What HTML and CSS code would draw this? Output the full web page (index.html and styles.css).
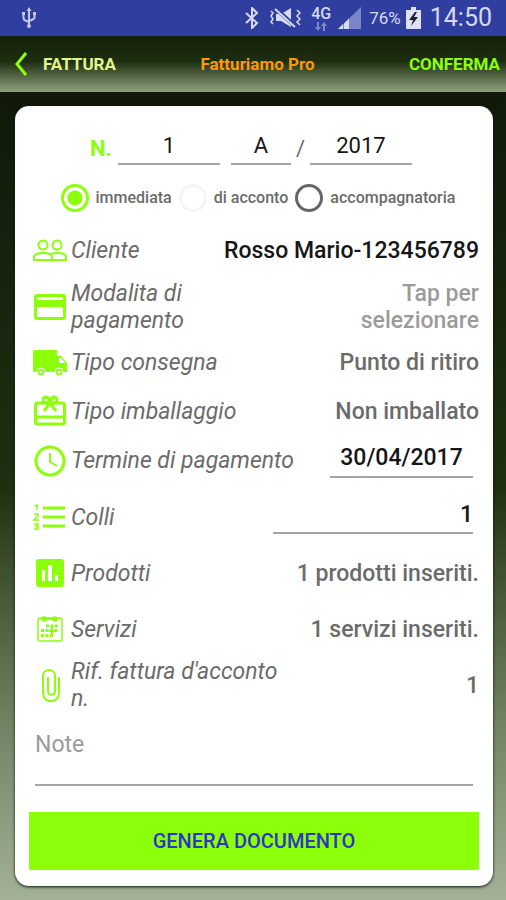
FILE: index.html
```html
<!DOCTYPE html>
<html lang="it">
<head>
  <meta charset="UTF-8" />
  <meta name="viewport" content="width=device-width, initial-scale=1.0">
  <title>Fatturiamo Pro - Fattura</title>
  <link rel="stylesheet" href="styles.css">
</head>
<body>
  <div class="statusbar">
    <svg class="usb" width="16" height="22" viewBox="0 0 16 22" fill="none" stroke="#c3c9ec" stroke-width="2">
      <path d="M8 3v15M2.500 7v4q0 2 2 2.500l3.500 1.500M13.500 7v3q0 2-2 2.500L8 14"/>
      <path d="M8 0l2.500 4h-5zM1 5h3v3H1zM12 5h3v3h-3z" fill="#c3c9ec" stroke="none"/>
      <circle cx="8" cy="19" r="2" fill="#c3c9ec" stroke="none"/>
    </svg>
    <div class="status-icons">
      <svg width="16" height="22" viewBox="0 0 16 22" fill="none" stroke="#d5d9f2" stroke-width="2">
        <path d="M2 6l11 10-5 5V1l5 5L2 16"/>
      </svg>
      <svg class="mute" width="33" height="22" viewBox="0 0 33 22" fill="none" stroke="#d5d9f2" stroke-width="2">
        <path d="M7 7h5l10-6v19l-10-6H7z" fill="#d5d9f2" stroke="none"/>
        <path d="M6 1l21 19" stroke="#303f9f" stroke-width="4"/>
        <path d="M6 2l20 18"/>
        <path d="M2 4l2 2-2 3 2 3-2 3 2 2M28 3l3 3-3 3 3 3-3 3 3 3" stroke-width="1.500"/>
      </svg>
      <div class="network">
        <span>4G</span>
        <svg width="12" height="9" viewBox="0 0 12 9" fill="#8089c8"><path d="M3 9L0 5h2V0h2v5h2zM9 0l3 4h-2v5H8V4H6z"/></svg>
      </div>
      <svg class="signal" width="23" height="22" viewBox="0 0 23 22">
        <path d="M23 0v22H0z" fill="#7a84c6"/>
        <path d="M5 17v5H0zM11 11.500V22H6v-5.500z" fill="#d5d9f2"/>
      </svg>
      <span class="percent">76%</span>
      <svg width="15" height="22" viewBox="0 0 15 22">
        <path d="M5 0h5v3h5v19H0V3h5z" fill="#dfe2f5"/>
        <path d="M9 5l-6 8h4l-2 6 7-9H8l3-5z" fill="#1c2030"/>
      </svg>
      <span class="clock">14:50</span>
    </div>
  </div>

  <header>
    <a class="back" href="#">
      <svg width="12" height="24" viewBox="0 0 12 24" fill="none" stroke="#8cff0a" stroke-width="3"><path d="M11 1L2 12l9 11"/></svg>
      FATTURA
    </a>
    <h1>Fatturiamo Pro</h1>
    <button class="confirm" type="button">CONFERMA</button>
  </header>

  <main>
    <form class="card">
      <div class="number">
        <label for="numero">N.</label>
        <input type="text" id="numero" value="1">
        <input class="short" type="text" aria-label="Serie" value="A">
        <span>/</span>
        <input type="text" aria-label="Anno" value="2017">
      </div>

      <div class="types">
        <label><input type="radio" name="tipo" checked>immediata</label>
        <label><input class="faded" type="radio" name="tipo">di acconto</label>
        <label><input type="radio" name="tipo">accompagnatoria</label>
      </div>

      <div class="row">
        <svg class="icon" viewBox="0 0 36 36" fill="none" stroke="#8cff0a" stroke-width="2">
          <circle cx="11" cy="12" r="4.500"/><circle cx="25" cy="12" r="4.500"/>
          <path d="M2 27v-3c0-3 5-4 9-4s9 1 9 4v3zM20 27h14v-3c0-3-5-4-9-4-3 0-5 .5-7 1.500"/>
        </svg>
        <span class="name">Cliente</span>
        <span class="value dark">Rosso Mario-123456789</span>
      </div>
      <div class="row double">
        <svg class="icon" viewBox="0 0 36 36">
          <path fill="#8cff0a" fill-rule="evenodd" d="M5 5h26q3 0 3 3v20q0 3-3 3H5q-3 0-3-3V8q0-3 3-3zM5 8v3h26V8zM5 18v10h26V18z"/>
        </svg>
        <span class="name">Modalita di pagamento</span>
        <button class="value pick" type="button">Tap per selezionare</button>
      </div>
      <div class="row">
        <svg class="icon" viewBox="0 0 36 36" fill="#8cff0a">
          <path d="M3 5h22v6h4l6 7v9H1V7q0-2 2-2z"/>
          <path d="M27 13h2l4 5h-6z" fill="#fff"/>
          <circle cx="9" cy="27" r="4" stroke="#fff" /><circle cx="27" cy="27" r="4" stroke="#fff"/>
          <circle cx="9" cy="27" r="1.500" fill="#fff"/><circle cx="27" cy="27" r="1.500" fill="#fff"/>
        </svg>
        <span class="name">Tipo consegna</span>
        <span class="value">Punto di ritiro</span>
      </div>
      <div class="row">
        <svg class="icon" viewBox="0 0 36 36" fill="none" stroke="#8cff0a" stroke-width="3">
          <path d="M5.500 9h25q2 0 2 2v17q0 2-2 2h-25q-2 0-2-2V11q0-2 2-2zM4 23h28M18 9l-6 8M18 9l6 8"/>
          <circle cx="14" cy="6" r="3"/><circle cx="22" cy="6" r="3"/>
        </svg>
        <span class="name">Tipo imballaggio</span>
        <span class="value">Non imballato</span>
      </div>
      <div class="row">
        <svg class="icon" viewBox="0 0 36 36" fill="none" stroke="#8cff0a" stroke-width="3">
          <circle cx="18" cy="18" r="14"/><path d="M18 10v9l7 4" stroke-width="2"/>
        </svg>
        <label class="name" for="termine">Termine di pagamento</label>
        <input class="date" type="text" id="termine" value="30/04/2017">
      </div>
      <div class="row colli">
        <svg class="icon" viewBox="0 0 36 36" fill="none" stroke="#8cff0a" stroke-width="3">
          <path d="M11 9h22M11 18h22M11 27h22"/>
          <path d="M3 7l2-1v5M2 15h4v2l-4 4h5M2 25h4v5H2M3 27.500h3" stroke-width="1.500"/>
        </svg>
        <label class="name" for="colli">Colli</label>
        <input class="count" type="text" id="colli" value="1">
      </div>
      <div class="row tall">
        <svg class="icon" viewBox="0 0 36 36">
          <rect x="4" y="4" width="28" height="28" rx="3" fill="#8cff0a"/>
          <path d="M10 15h3v11h-3zM16 10h4v16h-4zM23 20h3v6h-3z" fill="#fff"/>
        </svg>
        <span class="name">Prodotti</span>
        <span class="value">1 prodotti inseriti.</span>
      </div>
      <div class="row tall">
        <svg class="icon" viewBox="0 0 36 36" fill="none" stroke="#8cff0a" stroke-width="1.500">
          <rect x="6" y="7" width="24" height="23" rx="2"/>
          <path d="M11 8h14" stroke-width="2"/>
          <circle cx="12" cy="8" r="2" fill="#8cff0a"/><circle cx="23" cy="8" r="2" fill="#8cff0a"/>
          <path d="M14 15h13M9 19.500h18M9 24.500h13" stroke-width="3" stroke-dasharray="3 1.500"/>
          <path d="M20 16v8M17 20h7" stroke-width="2"/>
        </svg>
        <span class="name">Servizi</span>
        <span class="value">1 servizi inseriti.</span>
      </div>
      <div class="row tall">
        <svg class="icon" viewBox="0 0 36 36" fill="none" stroke="#8cff0a" stroke-width="2">
          <path d="M27 10v16c0 11-16 11-16 0V9c0-8 12-8 12 0v15c0 5-7 5-7 0V10"/>
        </svg>
        <span class="name">Rif. fattura d'acconto n.</span>
        <span class="value">1</span>
      </div>

      <textarea aria-label="Note" placeholder="Note" rows="2"></textarea>
      <button class="generate" type="button">GENERA DOCUMENTO</button>
    </form>
  </main>
</body>
</html>
```
FILE: styles.css
```css
* { box-sizing: border-box; }
body { margin: 0; min-height: 100vh; display: flex; flex-direction: column; font-family: Roboto, sans-serif; font-size: 23px; color: #6b6b6b; background: #10190a; }
input, button, textarea { font-family: inherit; font-size: inherit; margin: 0; border: none; background: none; border-radius: 0; padding: 0; }
svg { flex: none; display: block; }

.statusbar { height: 36px; padding: 0 14px 0 21px; display: flex; justify-content: space-between; align-items: center; background: #303f9f; color: #d5d9f2; }
.status-icons { display: flex; align-items: center; }
.mute { margin: 0 9px; }
.network { display: flex; flex-direction: column; align-items: center; font-size: 16px; line-height: 16px; font-weight: 500; }
.signal { margin: 0 8px 0 7px; }
.percent { font-size: 17px; margin-right: 5px; }
.clock { font-size: 25px; line-height: 36px; margin-left: 9px; }

header { height: 56px; padding: 0 6px 0 15px; display: grid; grid-template-columns: 1fr auto 1fr; align-items: center; background: linear-gradient(#141f09, #1d2e10 45%, #8fa080); }
h1 { margin: 0; font-size: 17px; font-weight: 700; color: #ff9800; }
.back { display: flex; align-items: center; gap: 16px; font-size: 17px; font-weight: 700; color: #e1f58c; text-decoration: none; }
.confirm { justify-self: end; font-size: 17px; font-weight: 700; color: #8cff0a; }

main { flex: 1; padding: 14px 13px 14px 15px; background: linear-gradient(#10190a, #1d3010 49%, #3a4c2c 58%, #6f8363 78%, #a3b197); }
.card { padding: 24px 14px 16px; background: #fff; border-radius: 14px; box-shadow: 0 1px 3px #0a1400; }
.card input[type="text"] { min-width: 0; height: 34px; padding-bottom: 4px; border-bottom: 2px solid #a5a5a5; color: #161616; }

.number { display: flex; justify-content: center; align-items: center; height: 36px; margin-bottom: 3px; padding-right: 6px; font-size: 22px; }
.number label { margin-right: 6px; font-weight: 700; color: #8cff0a; }
.number input { width: 102px; text-align: center; }
.number .short { width: 60px; margin: 0 5px 0 11px; }
.number span { margin-right: 5px; }

.types { display: flex; justify-content: center; align-items: center; gap: 7px; height: 57px; padding-left: 8px; font-size: 16px; font-weight: 500; }
.types label { display: flex; align-items: center; gap: 7px; }
.types input { appearance: none; width: 28px; height: 28px; border: 3px solid #666; border-radius: 50%; }
.types input:checked { border-color: #8cff0a; background: radial-gradient(#8cff0a 7px, #fff 8px); }
.types .faded { border-color: #f5f5f5; }

.row { display: flex; align-items: center; min-height: 49px; padding-left: 3px; line-height: 27px; }
.double { min-height: 63px; }
.tall { min-height: 56px; }
.colli { min-height: 60px; padding-top: 4px; }
.icon { width: 36px; height: 36px; margin-right: 3px; }
.name { flex: 1; max-width: 226px; font-style: italic; }
.double .name { max-width: 150px; }
.value { margin-left: auto; text-align: right; font-weight: 500; color: #6b6b6b; }
.dark { color: #161616; }
.pick { width: 130px; line-height: 27px; color: #9b9b9b; }
.date, .count { margin: 0 6px 0 auto; font-weight: 500; }
.date { width: 143px; text-align: center; }
.count { width: 200px; text-align: right; }

textarea { display: block; width: calc(100% - 12px); height: 73px; margin: 0 6px 26px; padding-top: 18px; border-bottom: 2px solid #a5a5a5; resize: none; }
textarea::placeholder { color: #9b9b9b; }
.generate { display: block; width: 100%; height: 58px; background: #8cff0a; color: #2b35c8; font-size: 20px; font-weight: 500; }
```
